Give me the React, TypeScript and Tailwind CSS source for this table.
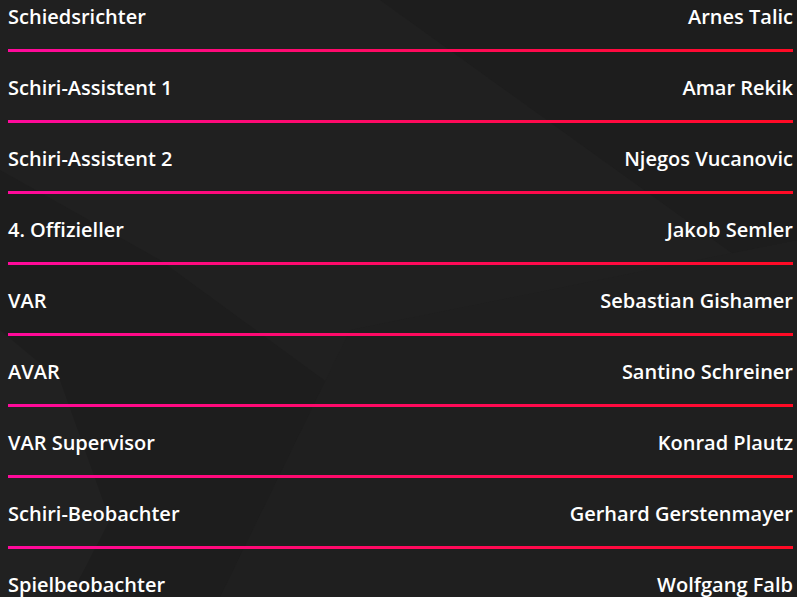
import React from "react";

const rows: [string, string][] = [
  ["Schiedsrichter", "Arnes Talic"],
  ["Schiri-Assistent 1", "Amar Rekik"],
  ["Schiri-Assistent 2", "Njegos Vucanovic"],
  ["4. Offizieller", "Jakob Semler"],
  ["VAR", "Sebastian Gishamer"],
  ["AVAR", "Santino Schreiner"],
  ["VAR Supervisor", "Konrad Plautz"],
  ["Schiri-Beobachter", "Gerhard Gerstenmayer"],
  ["Spielbeobachter", "Wolfgang Falb"],
];

export default function App() {
  return (
    <div className="relative h-[597px] w-[797px] overflow-hidden bg-[#1d1d1d]">
      <svg
        className="absolute inset-0"
        width="797"
        height="597"
        viewBox="0 0 797 597"
        aria-hidden="true"
      >
        <polygon points="0,0 380,0 797,300 797,597 620,597 160,260 0,170" fill="#202020" />
        <polygon points="0,330 60,380 110,520 70,597 0,597" fill="#212121" />
        <polygon points="350,330 797,240 797,597 220,597" fill="#1f1f1f" />
      </svg>
      <div
        className="relative flex flex-col pl-[8px] pr-[4px] pt-[3px] text-white"
        style={{ fontFamily: "'Open Sans', sans-serif" }}
      >
        {rows.map(([role, name], i) => (
          <div key={i} className="flex flex-col pb-[22px]">
            <div className="flex h-[28px] items-center justify-between text-[20px] font-semibold leading-[28px]">
              <span>{role}</span>
              <span>{name}</span>
            </div>
            <div className="mt-[18px] h-[3px] w-full bg-[linear-gradient(to_right,#ff0a9c,#ff0a24)]" />
          </div>
        ))}
      </div>
    </div>
  );
}
